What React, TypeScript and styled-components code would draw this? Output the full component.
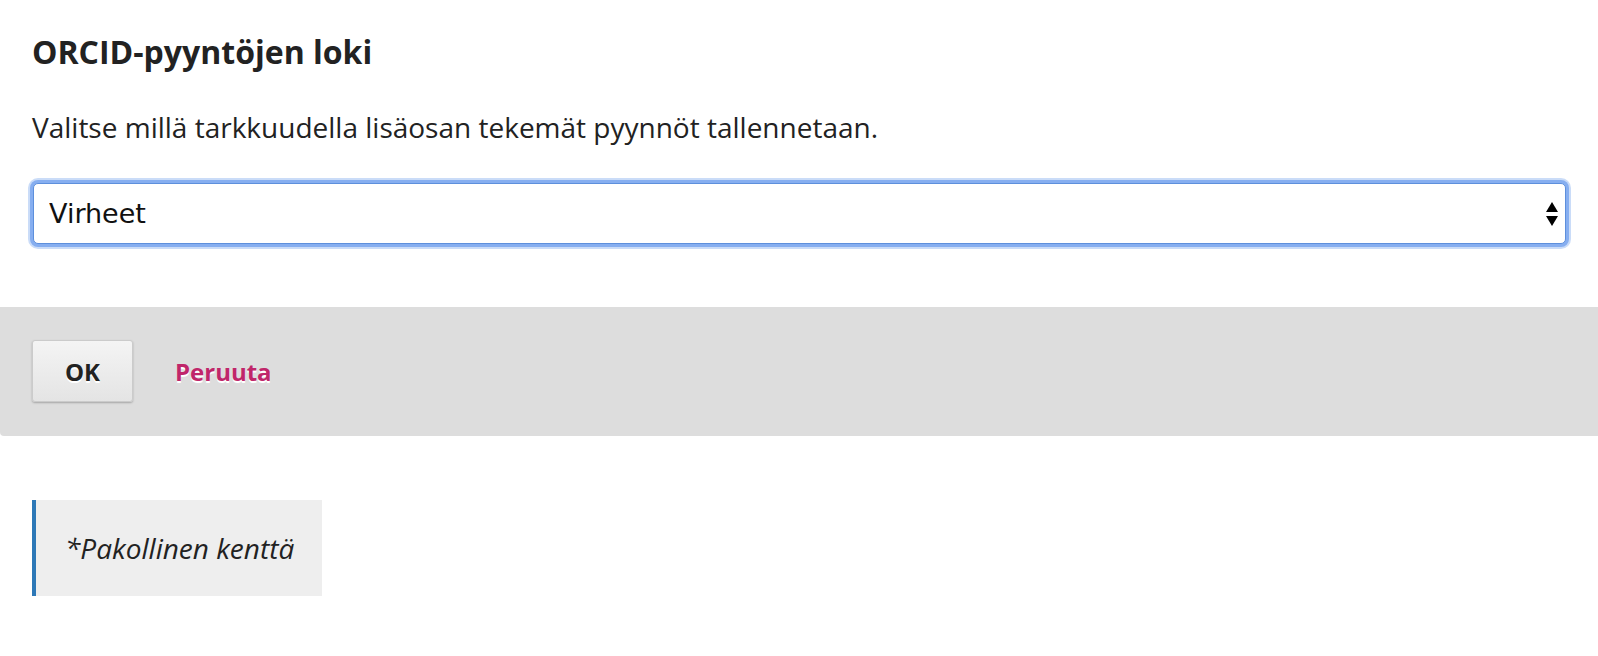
import React from "react";
import styled, { createGlobalStyle } from "styled-components";

const Global = createGlobalStyle`
  html, body { margin: 0; padding: 0; background: #fff; }
  body { font-family: "Open Sans", "Noto Sans", sans-serif; color: #222; }
  * { box-sizing: border-box; }
`;

const Form = styled.form`
  display: flex;
  flex-direction: column;
  padding-top: 33px;
`;

const Section = styled.div`
  display: flex;
  flex-direction: column;
  padding: 0 32px;
`;

const Title = styled.h2`
  margin: 0;
  font-size: 32px;
  line-height: 38px;
  font-weight: 700;
  color: #222;
`;

const Description = styled.p`
  margin: 37px 0 0;
  font-size: 28px;
  line-height: 39px;
  color: #222;
`;

const SelectWrap = styled.div`
  position: relative;
  margin-top: 36px;
  margin-left: 1px;
`;

const Select = styled.select`
  appearance: none;
  -webkit-appearance: none;
  width: 100%;
  height: 61px;
  padding: 0 40px 0 15px;
  font-family: "DejaVu Sans", "Liberation Sans", sans-serif;
  font-size: 27px;
  color: #111;
  background: #fff;
  border: 1px solid #5d8fdc;
  border-radius: 5px;
  box-shadow: 0 0 0 3px #86aef0, 0 0 0 5px #cadcf8;
  outline: none;
`;

const Arrows = styled.svg`
  position: absolute;
  right: 7px;
  top: 50%;
  transform: translateY(-50%);
  pointer-events: none;
`;

const Footer = styled.div`
  display: flex;
  align-items: center;
  gap: 42px;
  margin-top: 63px;
  padding: 33px 32px 34px;
  background: #ddd;
  border-bottom-left-radius: 4px;
`;

const Button = styled.button`
  width: 101px;
  height: 62px;
  padding: 0;
  font-family: "Open Sans", sans-serif;
  font-size: 24px;
  font-weight: 700;
  color: #222;
  text-shadow: 0 2px 0 #fff;
  background: linear-gradient(#f4f4f4, #e4e4e4);
  border: 1px solid #cbcbcb;
  border-radius: 3px;
  box-shadow: 0 1px 2px rgba(0, 0, 0, 0.25);
  cursor: pointer;
`;

const CancelLink = styled.a`
  font-size: 24px;
  font-weight: 700;
  color: #c0266a;
  text-shadow: 0 2px 0 #fff;
  text-decoration: none;
  cursor: pointer;
`;

const Note = styled.div`
  align-self: flex-start;
  margin: 64px 0 0 32px;
  width: 290px;
  height: 96px;
  display: flex;
  align-items: center;
  padding-left: 29px;
  background: #eee;
  border-left: 4px solid #2d78b7;
  font-size: 28px;
  font-style: italic;
  color: #222;
`;

export default function App() {
  return (
    <>
      <Global />
      <Form onSubmit={(e) => e.preventDefault()}>
        <Section>
          <Title>ORCID-pyyntöjen loki</Title>
          <Description>
            Valitse millä tarkkuudella lisäosan tekemät pyynnöt tallennetaan.
          </Description>
          <SelectWrap>
            <Select defaultValue="errors">
              <option value="errors">Virheet</option>
              <option value="all">Kaikki</option>
              <option value="off">Ei mitään</option>
            </Select>
            <Arrows width="14" height="26" viewBox="0 0 14 26">
              <path d="M7 1 L13 11 L1 11 Z" fill="#000" />
              <path d="M1 15 L13 15 L7 25 Z" fill="#000" />
            </Arrows>
          </SelectWrap>
        </Section>
        <Footer>
          <Button type="submit">OK</Button>
          <CancelLink>Peruuta</CancelLink>
        </Footer>
        <Note>*Pakollinen kenttä</Note>
      </Form>
    </>
  );
}
